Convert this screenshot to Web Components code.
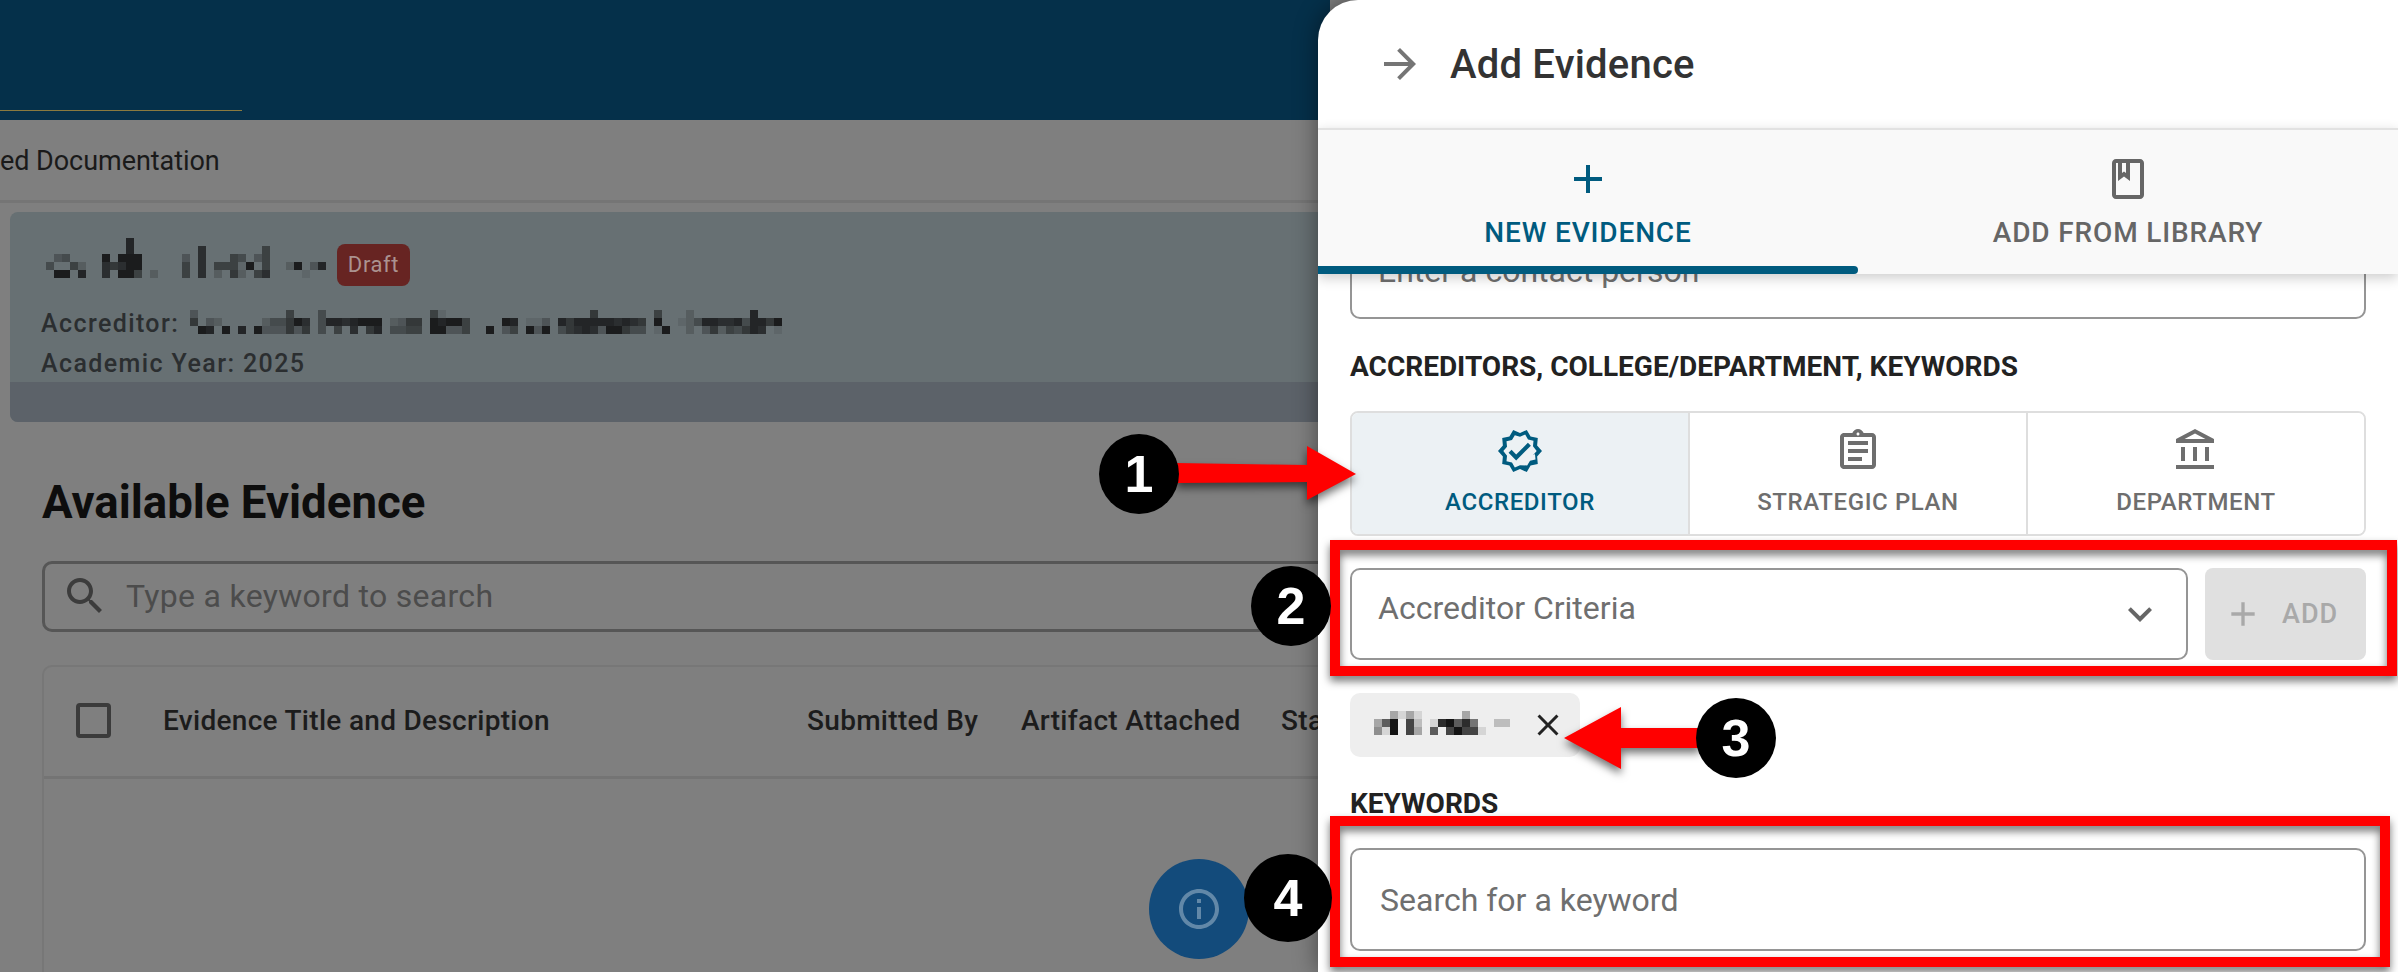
<!DOCTYPE html>
<html>
<head>
<meta charset="utf-8">
<title>Add Evidence</title>
<style>
  html, body { margin: 0; padding: 0; }
  body { width: 2398px; height: 972px; overflow: hidden; font-family: Roboto, "Liberation Sans", sans-serif; }
</style>
</head>
<body>
<evidence-screen></evidence-screen>

<script>
const ICONS = {
  arrow: 'M12 4l-1.41 1.41L16.17 11H4v2h12.17l-5.58 5.59L12 20l8-8z',
  add: 'M19 13h-6v6h-2v-6H5v-2h6V5h2v6h6v2z',
  book: 'M18 2H6c-1.1 0-2 .9-2 2v16c0 1.1.9 2 2 2h12c1.1 0 2-.9 2-2V4c0-1.1-.9-2-2-2zM9 4h2v5l-1-.75L9 9V4zm9 16H6V4h1v9l3-2.25L13 13V4h5v16z',
  verified: 'M23 11.99l-2.44-2.79.34-3.69-3.61-.82L15.4 1.5 12 2.96 8.6 1.5 6.71 4.69 3.1 5.5l.34 3.7L1 11.99l2.44 2.79-.34 3.7 3.61.82 1.89 3.2L12 21.03l3.4 1.47 1.89-3.19 3.61-.82-.34-3.69L23 11.99zm-3.51 1.46.26 2.79-2.74.62-1.43 2.41L12 19.08l-2.58 1.12-1.43-2.41-2.74-.62.26-2.8L3.66 12l1.85-2.12-.26-2.78 2.74-.61 1.43-2.41L12 4.92l2.58-1.11 1.43 2.41 2.74.62-.26 2.79L20.34 12l-1.85 2.12zM10.09 13.75l-2.32-2.33-1.48 1.49 3.8 3.81 7.34-7.36-1.48-1.49z',
  clipboard: 'M7 15h7v2H7zm0-4h10v2H7zm0-4h10v2H7zm12-4h-4.18C14.4 1.84 13.3 1 12 1c-1.3 0-2.4.84-2.82 2H5c-.14 0-.27.01-.4.04-.39.08-.74.28-1.01.55-.18.18-.33.4-.43.64-.1.23-.16.49-.16.77v14c0 .27.06.54.16.78s.25.45.43.64c.27.27.62.47 1.01.55.13.02.26.03.4.03h14c1.1 0 2-.9 2-2V5c0-1.1-.9-2-2-2zm-7-.25c.41 0 .75.34.75.75s-.34.75-.75.75-.75-.34-.75-.75.34-.75.75-.75zM19 19H5V5h14v14z',
  bank: 'M6.5 10h-2v7h2v-7zm6 0h-2v7h2v-7zm8.5 9H2v2h19v-2zm-2.5-9h-2v7h2v-7zm-7-6.74L16.71 6H6.29l5.21-2.74m0-2.26L2 6v2h19V6l-9.5-5z',
  search: 'M15.5 14h-.79l-.28-.27C15.41 12.59 16 11.11 16 9.5 16 5.91 13.09 3 9.5 3S3 5.91 3 9.5 5.91 16 9.5 16c1.61 0 3.09-.59 4.23-1.57l.27.28v.79l5 4.99L20.49 19l-4.99-5zm-6 0C7.01 14 5 11.99 5 9.5S7.01 5 9.5 5 14 7.01 14 9.5 11.99 14 9.5 14z',
  chevron: 'M16.59 8.59 12 13.17 7.41 8.59 6 10l6 6 6-6z',
  close: 'M19 6.41 17.59 5 12 10.59 6.41 5 5 6.41 10.59 12 5 17.59 6.41 19 12 13.41 17.59 19 19 17.59 13.41 12z',
  info: 'M11 7h2v2h-2zm0 4h2v6h-2zm1-9C6.48 2 2 6.48 2 12s4.48 10 10 10 10-4.48 10-10S17.52 2 12 2zm0 18c-4.41 0-8-3.59-8-8s3.59-8 8-8 8 3.59 8 8-3.59 8-8 8z'
};

class EvIcon extends HTMLElement {
  connectedCallback() {
    const size = this.getAttribute('size') || 48;
    const root = this.attachShadow({mode: 'open'});
    root.innerHTML = `
      <style>
        :host { display: block; width: ${size}px; height: ${size}px; flex: none; }
        svg { display: block; width: 100%; height: 100%; fill: currentColor; }
      </style>
      <svg viewBox="0 0 24 24"><path d="${ICONS[this.getAttribute('name')]}"/></svg>
    `;
  }
}

// the blurred-out names: one digit per 8px cell, higher is darker
class MosaicBlock extends HTMLElement {
  connectedCallback() {
    const rows = this.getAttribute('rows').split('|');
    const ink = this.getAttribute('ink') || '#1b1c1d';
    const cols = Math.max(...rows.map(r => r.length));
    let rects = '';
    rows.forEach((row, y) => {
      [...row].forEach((c, x) => {
        if (c !== '.') rects += `<rect x="${x * 8}" y="${y * 8}" width="8" height="8" fill="${ink}" opacity="${(+c / 9).toFixed(2)}"/>`;
      });
    });
    const root = this.attachShadow({mode: 'open'});
    root.innerHTML = `
      <style>
        :host { display: block; flex: none; width: ${cols * 8}px; height: ${rows.length * 8}px; }
        svg { display: block; }
      </style>
      <svg width="${cols * 8}" height="${rows.length * 8}" shape-rendering="crispEdges">${rects}</svg>
    `;
  }
}

class ReviewCard extends HTMLElement {
  constructor() {
    super();
    this.attachShadow({mode: 'open'}).innerHTML = `
      <style>
        :host { display: block; margin: 9px 0 0 10px; height: 210px; border-radius: 8px 0 0 8px; overflow: hidden; background: #677073; color: #2b2e30; }
        .top { height: 170px; padding: 26px 0 0 31px; box-sizing: border-box; }
        .name { display: flex; align-items: flex-start; margin-left: 5px; height: 65px; }
        .badge { margin: 6px 0 0 11px; width: 73px; height: 42px; border-radius: 8px; background: #672422; color: #ab9290; font-size: 22px; line-height: 42px; text-align: center; letter-spacing: .6px; }
        .line { display: flex; align-items: center; height: 40px; font-size: 25px; font-weight: 500; letter-spacing: 1.4px; white-space: nowrap; }
        .line span { width: 149px; flex: none; }
        .line mosaic-block { margin-top: -2px; }
        .band { height: 40px; background: #5c6269; }
      </style>
      <div class="top">
        <div class="name">
          <mosaic-block rows="..........8|..........8........7.......5|.34....9.999.....3.7...54.35|4..52..76799.....5.7.55519.5..29.38|.99.8..7.995.2...5.7.2.62.57....1"></mosaic-block>
          <span class="badge">Draft</span>
        </div>
        <div class="line"><span>Accreditor:</span>
          <mosaic-block rows="3...........5...4.............51..................6.......5...2.......8...|6.32.....244697.48878999.2366.98995....98.113.86888887876.9..1248877848869|.98.9.8.9333636.4.5.7.68.4455.99335..9.35.939.46787399644.19..2.36254687.1"></mosaic-block>
        </div>
        <div class="line">Academic Year: 2025</div>
      </div>
      <div class="band"></div>
    `;
  }
}

class EvidenceList extends HTMLElement {
  constructor() {
    super();
    this.attachShadow({mode: 'open'}).innerHTML = `
      <style>
        :host { display: block; padding-left: 42px; }
        h2 { margin: 0; height: 139px; line-height: 162px; box-sizing: border-box; font-size: 45.6px; font-weight: 700; color: #0d0d0d; white-space: nowrap; }
        .search { display: flex; align-items: center; height: 71px; box-sizing: border-box; border: 3px solid #565656; border-right: 0; border-radius: 10px 0 0 10px; color: #3c3c3c; padding: 0 0 2px 16px; gap: 17px; }
        .search span { font-size: 32px; letter-spacing: .3px; color: #4c4c4c; white-space: nowrap; }
        .table { margin-top: 33px; height: 320px; border: 2px solid #777; border-right: 0; border-bottom: 0; border-radius: 10px 0 0 0; }
        .head { display: flex; align-items: center; height: 112px; padding-bottom: 2px; box-sizing: border-box; border-bottom: 3px solid #747474; font-size: 28px; font-weight: 500; letter-spacing: .3px; color: #1c1c1c; white-space: nowrap; }
        .box { width: 35px; height: 35px; margin-left: 32px; box-sizing: border-box; border: 4px solid #3b3b3b; border-radius: 4px; flex: none; }
        .title { margin-left: 52px; width: 644px; flex: none; }
        .sub { width: 214px; flex: none; }
        .art { width: 260px; flex: none; }
      </style>
      <h2>Available Evidence</h2>
      <div class="search"><ev-icon name="search"></ev-icon><span>Type a keyword to search</span></div>
      <div class="table">
        <div class="head">
          <div class="box"></div>
          <div class="title">Evidence Title and Description</div>
          <div class="sub">Submitted By</div>
          <div class="art">Artifact Attached</div>
          <div>Status</div>
        </div>
      </div>
    `;
  }
}

class EvidenceBackdrop extends HTMLElement {
  constructor() {
    super();
    this.attachShadow({mode: 'open'}).innerHTML = `
      <style>
        :host { display: block; width: 1330px; height: 972px; overflow: hidden; background: #7f7f7f; }
        .bar { height: 120px; background: #05304a; display: flex; align-items: flex-end; padding-bottom: 9px; box-sizing: border-box; }
        .bar i { display: block; width: 242px; height: 1px; background: #8a7a3f; }
        .crumb { height: 83px; box-sizing: border-box; border-bottom: 3px solid #757575; line-height: 82px; font-size: 27px; letter-spacing: -.05px; color: #1a1a1a; white-space: nowrap; }
      </style>
      <div class="bar"><i></i></div>
      <div class="crumb">ed Documentation</div>
      <review-card></review-card>
      <evidence-list></evidence-list>
    `;
  }
}

class OptionTile extends HTMLElement {
  connectedCallback() {
    const on = this.hasAttribute('active');
    const root = this.attachShadow({mode: 'open'});
    root.innerHTML = `
      <style>
        :host { flex: 1; display: flex; flex-direction: column; align-items: center; background: ${on ? '#ecf1f4' : '#fff'}; color: ${on ? '#005b7f' : '#6e6e6e'}; padding-top: 14px; box-sizing: border-box; }
        span { margin-top: 12px; font-size: 24px; line-height: 30px; font-weight: 500; letter-spacing: .6px; white-space: nowrap; }
      </style>
      <ev-icon name="${this.getAttribute('icon')}"></ev-icon>
      <span><slot></slot></span>
    `;
  }
}

class EvidencePanel extends HTMLElement {
  constructor() {
    super();
    this.attachShadow({mode: 'open'}).innerHTML = `
      <style>
        :host { display: flex; flex-direction: column; position: absolute; left: 1318px; top: 0; width: 1080px; height: 972px; background: #fff; border-radius: 40px 0 0 0; overflow: hidden; box-shadow: 0 0 24px rgba(0,0,0,.45); }
        header { display: flex; align-items: center; height: 128px; padding-left: 58px; gap: 26px; box-sizing: border-box; flex: none; }
        header ev-icon { color: #757575; }
        header h1 { margin: 0; font-size: 40px; font-weight: 500; letter-spacing: .2px; color: #333; white-space: nowrap; }
        .tabs { display: flex; height: 146px; flex: none; background: #f9f9f9; border-top: 2px solid #e2e2e2; box-sizing: border-box; position: relative; z-index: 2; box-shadow: 0 4px 12px rgba(0,0,0,.2); }
        .tab { flex: 1; display: flex; flex-direction: column; align-items: center; padding-top: 25px; color: #666; font-size: 28px; font-weight: 500; letter-spacing: .85px; white-space: nowrap; }
        .tab.on { color: #005b7f; }
        .tab span { margin-top: 13px; line-height: 34px; }
        .ink { position: absolute; left: 0; bottom: 0; width: 540px; height: 8px; background: #005b7f; border-radius: 0 4px 4px 0; }
        .body { flex: 1; overflow: hidden; padding: 0 32px; }
        .field { box-sizing: border-box; border: 2px solid #959595; border-radius: 10px; font-size: 32px; color: #6f6f6f; padding-left: 26px; white-space: nowrap; }
        .contact { height: 92px; margin-top: -47px; line-height: 84px; }
        h3 { margin: 0; font-size: 28px; font-weight: 700; color: #222; line-height: 30px; white-space: nowrap; }
        .h1 { margin-top: 33px; }
        .tiles { display: flex; height: 125px; margin-top: 29px; border: 2px solid #dedede; border-radius: 8px; overflow: hidden; box-sizing: border-box; }
        .tiles option-tile + option-tile { border-left: 2px solid #dedede; }
        .pick { display: flex; gap: 17px; height: 92px; margin-top: 32px; }
        .select { flex: 1; display: flex; justify-content: space-between; line-height: 77px; padding-right: 22px; }
        .select ev-icon { color: #666; margin-top: 20px; }
        .add { width: 161px; display: flex; align-items: center; padding-left: 18px; box-sizing: border-box; gap: 19px; background: #e0e0e0; border-radius: 8px; color: #a9a9a9; font-size: 27px; font-weight: 500; letter-spacing: 1px; }
        .chip { display: flex; align-items: center; width: 230px; height: 64px; margin-top: 33px; padding: 0 14px 0 24px; box-sizing: border-box; background: #eee; border-radius: 10px; color: #222; justify-content: space-between; }
        .chip mosaic-block { margin-top: -4px; }
        .h2 { margin-top: 32px; }
        .keyword { height: 103px; margin-top: 29px; padding-left: 28px; line-height: 100px; font-size: 32px; }
      </style>
      <header><ev-icon name="arrow"></ev-icon><h1>Add Evidence</h1></header>
      <div class="tabs">
        <div class="tab on"><ev-icon name="add"></ev-icon><span>NEW EVIDENCE</span></div>
        <div class="tab"><ev-icon name="book"></ev-icon><span>ADD FROM LIBRARY</span></div>
        <div class="ink"></div>
      </div>
      <div class="body">
        <div class="field contact">Enter a contact person</div>
        <h3 class="h1">ACCREDITORS, COLLEGE/DEPARTMENT, KEYWORDS</h3>
        <div class="tiles">
          <option-tile icon="verified" active>ACCREDITOR</option-tile>
          <option-tile icon="clipboard">STRATEGIC PLAN</option-tile>
          <option-tile icon="bank">DEPARTMENT</option-tile>
        </div>
        <div class="pick">
          <div class="field select"><span>Accreditor Criteria</span><ev-icon name="chevron"></ev-icon></div>
          <div class="add"><ev-icon name="add" size="40"></ev-icon><span>ADD</span></div>
        </div>
        <div class="chip">
          <mosaic-block ink="#141414" rows="..3131.....3|369.72.189685..22|419.73.6.79771"></mosaic-block>
          <ev-icon name="close" size="36"></ev-icon>
        </div>
        <h3 class="h2">KEYWORDS</h3>
        <div class="field keyword">Search for a keyword</div>
      </div>
    `;
  }
}

// numbered dot of the annotated screenshot
class CalloutDot extends HTMLElement {
  connectedCallback() {
    const d = this.getAttribute('d') || 80;
    this.attachShadow({mode: 'open'}).innerHTML = `
      <style>
        :host { position: absolute; left: ${this.getAttribute('x') - d / 2}px; top: ${this.getAttribute('y') - d / 2}px; width: ${d}px; height: ${d}px; border-radius: 50%; background: #000; color: #fff; display: flex; align-items: center; justify-content: center; font: 700 52px "Liberation Sans", Arial, sans-serif; }
      </style>
      <slot></slot>
    `;
  }
}

class CalloutFrame extends HTMLElement {
  connectedCallback() {
    const [x, y, w, h] = this.getAttribute('box').split(' ');
    this.attachShadow({mode: 'open'}).innerHTML = `
      <style>
        :host { position: absolute; left: ${x}px; top: ${y}px; width: ${w}px; height: ${h}px; box-sizing: border-box; border: 10px solid #f00; filter: drop-shadow(0 5px 4px rgba(0,0,0,.55)); }
      </style>
    `;
  }
}

class CalloutLayer extends HTMLElement {
  constructor() {
    super();
    this.attachShadow({mode: 'open'}).innerHTML = `
      <style>
        :host { position: absolute; left: 0; top: 0; width: 2398px; height: 972px; pointer-events: none; }
        svg { position: absolute; left: 0; top: 0; filter: drop-shadow(0 5px 4px rgba(0,0,0,.55)); }
        polygon { fill: #f00; }
      </style>
      <svg width="2398" height="972">
        <polygon points="1176,463 1307,465 1307,446 1356,474 1307,500 1307,482 1176,483"/>
        <polygon points="1700,728 1621,728 1621,707 1564,738 1621,769 1621,748 1700,748"/>
      </svg>
      <callout-frame box="1330 540 1067 136"></callout-frame>
      <callout-frame box="1330 816 1060 151"></callout-frame>
      <callout-dot x="1139" y="474">1</callout-dot>
      <callout-dot x="1291" y="606">2</callout-dot>
      <callout-dot x="1736" y="738">3</callout-dot>
      <callout-dot x="1288" y="898" d="88">4</callout-dot>
    `;
  }
}

class EvidenceScreen extends HTMLElement {
  constructor() {
    super();
    this.attachShadow({mode: 'open'}).innerHTML = `
      <style>
        :host { display: block; position: relative; width: 2398px; height: 972px; overflow: hidden; background: #7f7f7f; }
        .fab { position: absolute; left: 1149px; top: 859px; width: 100px; height: 100px; border-radius: 50%; background: #134b7b; color: #6288a8; display: flex; align-items: center; justify-content: center; }
      </style>
      <evidence-backdrop></evidence-backdrop>
      <div class="fab"><ev-icon name="info" size="48"></ev-icon></div>
      <evidence-panel></evidence-panel>
      <callout-layer></callout-layer>
    `;
  }
}

customElements.define('ev-icon', EvIcon);
customElements.define('mosaic-block', MosaicBlock);
customElements.define('review-card', ReviewCard);
customElements.define('evidence-list', EvidenceList);
customElements.define('evidence-backdrop', EvidenceBackdrop);
customElements.define('option-tile', OptionTile);
customElements.define('evidence-panel', EvidencePanel);
customElements.define('callout-dot', CalloutDot);
customElements.define('callout-frame', CalloutFrame);
customElements.define('callout-layer', CalloutLayer);
customElements.define('evidence-screen', EvidenceScreen);
</script>
</body>
</html>
